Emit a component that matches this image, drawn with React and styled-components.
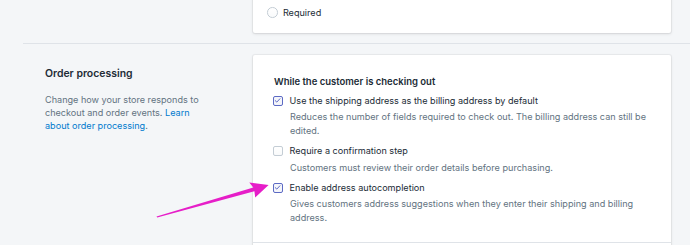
import styled, { createGlobalStyle } from "styled-components";

const GlobalStyle = createGlobalStyle`
  html, body {
    margin: 0;
    background: #f4f6f8;
  }
  body {
    font-family: Inter, "Noto Sans", "Liberation Sans", sans-serif;
    color: #212b36;
    -webkit-font-smoothing: antialiased;
  }
`;

const Page = styled.div`
  position: relative;
  width: 690px;
  height: 245px;
  overflow: hidden;
`;

// page is scrolled: the first card starts above the viewport
const Scroller = styled.div`
  margin-top: -40px;
  margin-left: 23px;
`;

const Section = styled.section`
  display: flex;
  padding: ${(p) => (p.$first ? "0 0 10px 22px" : "10.5px 0 0 22px")};
  border-top: ${(p) => (p.$first ? "none" : "1px solid #dfe3e8")};
`;

const Annotation = styled.div`
  width: 208px;
  flex-shrink: 0;
  padding-top: ${(p) => (p.$empty ? "0" : "11px")};
`;

const AnnotationTitle = styled.h2`
  margin: 0;
  font-size: 10.45px;
  line-height: 16px;
  font-weight: 600;
  color: #212b36;
`;

const AnnotationText = styled.p`
  margin: 11px 0 0;
  width: 160px;
  font-size: 9.1px;
  line-height: 13.33px;
  color: #637381;
`;

const Link = styled.a`
  color: #007ace;
  text-decoration: none;
`;

const Card = styled.div`
  width: 418px;
  background: #fff;
  border-radius: 2px;
  box-shadow: 0 0 0 1px rgba(63, 63, 68, 0.05), 0 1px 3px 0 rgba(63, 63, 68, 0.15);
`;

const CardSection = styled.div`
  padding: ${(p) => p.$pad};
  border-top: ${(p) => (p.$divided ? "1px solid #dfe3e8" : "none")};
`;

const CardHeading = styled.h3`
  margin: 0 0 6.3px 1.5px;
  font-size: 9.5px;
  line-height: 13.33px;
  font-weight: 600;
  color: #212b36;
`;

const OptionList = styled.div`
  display: flex;
  flex-direction: column;
  gap: ${(p) => p.$gap};
`;

const Row = styled.label`
  display: flex;
  align-items: center;
  gap: ${(p) => p.$gap};
  font-size: 9.1px;
  line-height: 13.33px;
  color: #212b36;
`;

const Radio = styled.span`
  width: 10.5px;
  height: 10.5px;
  box-sizing: border-box;
  border-radius: 50%;
  border: 1px solid #c4cdd5;
  background: linear-gradient(180deg, #fff, #f9fafb);
  flex-shrink: 0;
`;

const Box = styled.span`
  width: 10.5px;
  height: 10.5px;
  box-sizing: border-box;
  border-radius: 2px;
  border: 1px solid ${(p) => (p.$checked ? "#5c6ac4" : "#c4cdd5")};
  background: ${(p) => (p.$checked ? "#f4f5fa" : "linear-gradient(180deg, #fff, #f9fafb)")};
  display: flex;
  align-items: center;
  justify-content: center;
  flex-shrink: 0;
`;

const Help = styled.div`
  margin: 3px 0 0 17.5px;
  font-size: 9.1px;
  line-height: 13.33px;
  color: #637381;
`;

const Overlay = styled.svg`
  position: absolute;
  left: 0;
  top: 0;
  pointer-events: none;
`;

function Checkbox({ checked, label, help }) {
  return (
    <div>
      <Row $gap="6.6px">
        <Box $checked={checked}>
          {checked && (
            <svg width="7" height="7" viewBox="0 0 7 7">
              <path
                d="M1.2 3.6 L2.8 5.1 L5.9 1.8"
                fill="none"
                stroke="#5c6ac4"
                strokeWidth="1"
                strokeLinecap="round"
                strokeLinejoin="round"
              />
            </svg>
          )}
        </Box>
        {label}
      </Row>
      <Help>{help}</Help>
    </div>
  );
}

const options = [
  {
    label: "Use the shipping address as the billing address by default",
    help: "Reduces the number of fields required to check out. The billing address can still be edited.",
    checked: true,
  },
  {
    label: "Require a confirmation step",
    help: "Customers must review their order details before purchasing.",
    checked: false,
  },
  {
    label: "Enable address autocompletion",
    help: "Gives customers address suggestions when they enter their shipping and billing address.",
    checked: true,
  },
];

export default function App() {
  return (
    <>
      <GlobalStyle />
      <Page>
        <Scroller>
          <Section $first>
            <Annotation $empty />
            <Card>
              <CardSection $pad="46px 14px 14px">
                <Row $gap="5.4px">
                  <Radio />
                  Required
                </Row>
              </CardSection>
            </Card>
          </Section>

          <Section>
            <Annotation>
              <AnnotationTitle>Order processing</AnnotationTitle>
              <AnnotationText>
                Change how your store responds to checkout and order events.{" "}
                <Link href="#">Learn about order processing</Link>.
              </AnnotationText>
            </Annotation>
            <Card>
              <CardSection $pad="19.7px 19.5px 18px">
                <CardHeading>While the customer is checking out</CardHeading>
                <OptionList $gap="7.2px">
                  {options.map((o) => (
                    <Checkbox key={o.label} {...o} />
                  ))}
                </OptionList>
              </CardSection>
              <CardSection $divided $pad="30px 19.5px" />
            </Card>
          </Section>
        </Scroller>

        <Overlay width="690" height="245" viewBox="0 0 690 245">
          <polygon
            points="156.5,216.6 253.3,187.4 249.3,182.4 268.6,185 255.2,197.6 254.4,191.3 157.2,217.4"
            fill="#e61ec8"
          />
        </Overlay>
      </Page>
    </>
  );
}
